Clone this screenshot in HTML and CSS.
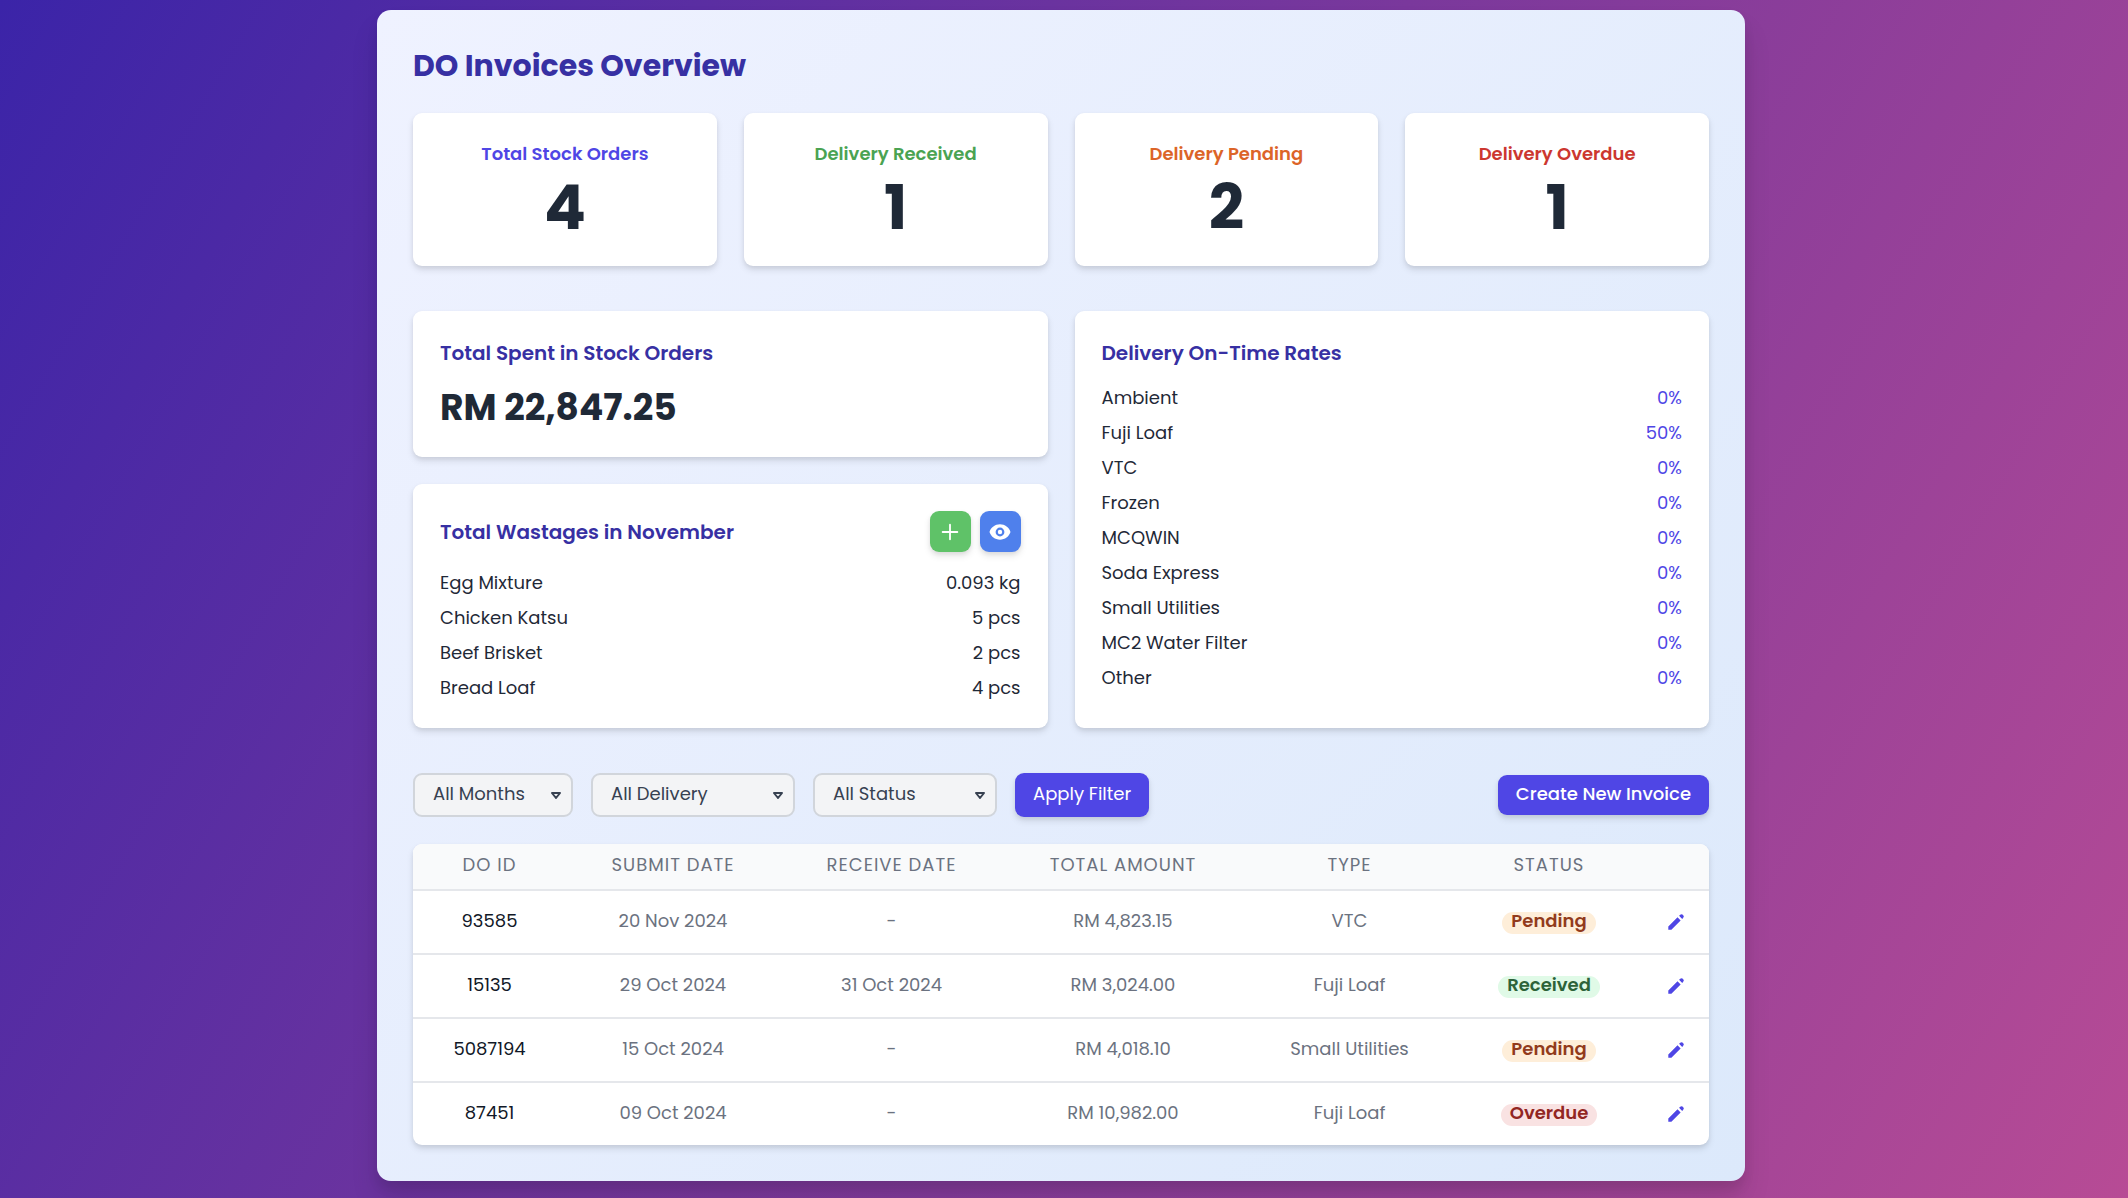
FILE: index.html
```html
<!DOCTYPE html>
<html lang="en">
<head>
<meta charset="utf-8">
<meta name="viewport" content="width=device-width, initial-scale=1">
<title>DO Invoices Overview</title>
<link rel="stylesheet" href="styles.css">
</head>
<body>
<svg class="sprite" aria-hidden="true">
  <symbol id="icon-pencil" viewBox="0 0 20 20"><path d="M13.586 3.586a2 2 0 112.828 2.828l-.793.793-2.828-2.828.793-.793zM11.379 5.793L3 14.172V17h2.828l8.38-8.379-2.83-2.828z"/></symbol>
  <symbol id="icon-plus" viewBox="0 0 24 24"><path d="M12 4v16m8-8H4" fill="none" stroke="currentColor" stroke-width="2" stroke-linecap="round"/></symbol>
  <symbol id="icon-eye" viewBox="0 0 20 20"><path d="M10 12a2 2 0 100-4 2 2 0 000 4z"/><path fill-rule="evenodd" d="M.458 10C1.732 5.943 5.522 3 10 3s8.268 2.943 9.542 7c-1.274 4.057-5.064 7-9.542 7S1.732 14.057.458 10zM14 10a4 4 0 11-8 0 4 4 0 018 0z"/></symbol>
</svg>
<main class="panel">
  <h1 class="page-title">DO Invoices Overview</h1>

  <section class="stats">
    <div class="card stat"><h2 class="stat-label indigo">Total Stock Orders</h2><p class="stat-value">4</p></div>
    <div class="card stat"><h2 class="stat-label green">Delivery Received</h2><p class="stat-value">1</p></div>
    <div class="card stat"><h2 class="stat-label orange">Delivery Pending</h2><p class="stat-value">2</p></div>
    <div class="card stat"><h2 class="stat-label red">Delivery Overdue</h2><p class="stat-value">1</p></div>
  </section>

  <section class="summary">
    <div class="summary-column">
      <div class="card">
        <h2 class="card-title">Total Spent in Stock Orders</h2>
        <p class="spent">RM 22,847.25</p>
      </div>
      <div class="card">
        <div class="card-head">
          <h2 class="card-title">Total Wastages in November</h2>
          <div class="card-actions">
            <button type="button" class="icon-button add" aria-label="Add wastage"><svg class="icon"><use href="#icon-plus"/></svg></button>
            <button type="button" class="icon-button view" aria-label="View wastages"><svg class="icon"><use href="#icon-eye"/></svg></button>
          </div>
        </div>
        <ul class="list">
          <li><span>Egg Mixture</span><span>0.093 kg</span></li>
          <li><span>Chicken Katsu</span><span>5 pcs</span></li>
          <li><span>Beef Brisket</span><span>2 pcs</span></li>
          <li><span>Bread Loaf</span><span>4 pcs</span></li>
        </ul>
      </div>
    </div>
    <div class="card">
      <h2 class="card-title">Delivery On-Time Rates</h2>
      <ul class="list rates">
        <li><span>Ambient</span><span class="rate">0%</span></li>
        <li><span>Fuji Loaf</span><span class="rate">50%</span></li>
        <li><span>VTC</span><span class="rate">0%</span></li>
        <li><span>Frozen</span><span class="rate">0%</span></li>
        <li><span>MCQWIN</span><span class="rate">0%</span></li>
        <li><span>Soda Express</span><span class="rate">0%</span></li>
        <li><span>Small Utilities</span><span class="rate">0%</span></li>
        <li><span>MC2 Water Filter</span><span class="rate">0%</span></li>
        <li><span>Other</span><span class="rate">0%</span></li>
      </ul>
    </div>
  </section>

  <div class="toolbar">
    <form class="filters">
      <div class="select-wrap months">
        <select class="select" aria-label="Month"><option>All Months</option></select>
        <svg class="caret" viewBox="0 0 10 8"><path d="M1 2h8L5 7z"/></svg>
      </div>
      <div class="select-wrap delivery">
        <select class="select" aria-label="Delivery"><option>All Delivery</option></select>
        <svg class="caret" viewBox="0 0 10 8"><path d="M1 2h8L5 7z"/></svg>
      </div>
      <div class="select-wrap status">
        <select class="select" aria-label="Status"><option>All Status</option></select>
        <svg class="caret" viewBox="0 0 10 8"><path d="M1 2h8L5 7z"/></svg>
      </div>
      <button type="button" class="button apply">Apply Filter</button>
    </form>
    <a href="#" class="button create">Create New Invoice</a>
  </div>

  <div class="table-card">
    <table class="invoices">
      <colgroup><col class="col-id"><col class="col-submit"><col class="col-receive"><col class="col-amount"><col class="col-type"><col class="col-status"><col class="col-edit"></colgroup>
      <thead>
        <tr><th>DO ID</th><th>Submit Date</th><th>Receive Date</th><th>Total Amount</th><th>Type</th><th>Status</th><th></th></tr>
      </thead>
      <tbody>
        <tr><td class="id">93585</td><td>20 Nov 2024</td><td>-</td><td>RM 4,823.15</td><td>VTC</td><td><span class="badge pending">Pending</span></td><td class="actions"><a href="#" class="edit" aria-label="Edit 93585"><svg class="icon"><use href="#icon-pencil"/></svg></a></td></tr>
        <tr><td class="id">15135</td><td>29 Oct 2024</td><td>31 Oct 2024</td><td>RM 3,024.00</td><td>Fuji Loaf</td><td><span class="badge received">Received</span></td><td class="actions"><a href="#" class="edit" aria-label="Edit 15135"><svg class="icon"><use href="#icon-pencil"/></svg></a></td></tr>
        <tr><td class="id">5087194</td><td>15 Oct 2024</td><td>-</td><td>RM 4,018.10</td><td>Small Utilities</td><td><span class="badge pending">Pending</span></td><td class="actions"><a href="#" class="edit" aria-label="Edit 5087194"><svg class="icon"><use href="#icon-pencil"/></svg></a></td></tr>
        <tr><td class="id">87451</td><td>09 Oct 2024</td><td>-</td><td>RM 10,982.00</td><td>Fuji Loaf</td><td><span class="badge overdue">Overdue</span></td><td class="actions"><a href="#" class="edit" aria-label="Edit 87451"><svg class="icon"><use href="#icon-pencil"/></svg></a></td></tr>
      </tbody>
    </table>
  </div>
</main>
</body>
</html>
```
FILE: styles.css
```css
*, *::before, *::after { box-sizing: border-box; }

body {
  margin: 0;
  min-height: 100vh;
  padding: 10px 22px 17px 16px;
  font-family: Poppins, Inter, "Open Sans", sans-serif;
  font-size: 18px;
  line-height: 27px;
  color: #1f2937;
  background: linear-gradient(120deg, #3b24a8, #7a389c 50%, #b74b95);
}

h1, h2, p, ul { margin: 0; padding: 0; }
ul { list-style: none; }
a { color: inherit; text-decoration: none; }
button, select { font: inherit; color: inherit; }

.sprite { display: none; }
.icon { display: block; width: 22px; height: 22px; fill: currentColor; }

.panel {
  max-width: 1368px;
  margin: 0 auto;
  padding: 36px;
  border-radius: 14px;
  background: linear-gradient(135deg, #eff2ff, #dce9fb);
  box-shadow: 0 20px 28px rgba(0, 0, 0, .1), 0 8px 11px rgba(0, 0, 0, .08);
}

.page-title {
  margin-bottom: 27px;
  font-size: 30px;
  line-height: 40px;
  font-weight: 700;
  color: #3730a3;
}

.card {
  padding: 27px;
  border-radius: 9px;
  background: #fff;
  box-shadow: 0 4px 7px rgba(0, 0, 0, .1), 0 2px 4px rgba(0, 0, 0, .06);
}

.stats {
  display: grid;
  grid-template-columns: repeat(4, 1fr);
  gap: 27px;
  margin-bottom: 45px;
}
.stat { text-align: center; }
.stat-label { font-size: 18px; line-height: 27px; font-weight: 600; }
.stat-value { margin-top: 9px; font-size: 62px; line-height: 63px; font-weight: 700; }
.indigo { color: #4f46e5; }
.green { color: #4aa352; }
.orange { color: #dc6428; }
.red { color: #cc3730; }

.summary {
  display: grid;
  grid-template-columns: 1fr 1fr;
  gap: 27px;
  margin-bottom: 45px;
}
.summary-column { display: flex; flex-direction: column; gap: 27px; }
.card-title { font-size: 20px; line-height: 30px; font-weight: 600; color: #3730a3; }
.spent { margin-top: 18px; font-size: 36px; line-height: 44px; font-weight: 700; }
.card-head {
  display: flex;
  align-items: center;
  justify-content: space-between;
  margin-bottom: 17px;
}
.card-actions { display: flex; gap: 9px; }
.icon-button {
  display: grid;
  place-items: center;
  width: 41px;
  height: 41px;
  padding: 0;
  border: 0;
  border-radius: 9px;
  color: #fff;
  box-shadow: 0 4px 7px rgba(0, 0, 0, .1), 0 2px 4px rgba(0, 0, 0, .06);
}
.add { background: #5fc268; }
.view { background: #4f80ec; }

.list { display: flex; flex-direction: column; gap: 8px; }
.list li { display: flex; justify-content: space-between; }
.rates { margin-top: 16px; }
.rate { color: #4f46e5; }

.toolbar {
  display: flex;
  align-items: center;
  justify-content: space-between;
  margin-bottom: 27px;
}
.filters { display: flex; gap: 18px; }
.select-wrap { position: relative; }
.months { width: 160px; }
.delivery { width: 204px; }
.status { width: 184px; }
.select {
  display: block;
  width: 100%;
  height: 44px;
  padding: 0 18px 4px;
  border: 2px solid #d1d5db;
  border-radius: 9px;
  appearance: none;
  color: #374151;
  background: #f3f4f6;
}
.caret {
  position: absolute;
  top: 18px;
  right: 12px;
  width: 10px;
  height: 8px;
  fill: none;
  stroke: #374151;
  stroke-width: 2;
  stroke-linejoin: round;
  pointer-events: none;
}
.button {
  padding: 0 18px 4px;
  border: 0;
  border-radius: 9px;
  font-weight: 400;
  color: #fff;
  background: #4f46e5;
  box-shadow: 0 4px 7px rgba(0, 0, 0, .1), 0 2px 4px rgba(0, 0, 0, .06);
}
.create { padding-bottom: 3px; line-height: 37px; font-weight: 500; }

.table-card {
  overflow: hidden;
  border-radius: 9px;
  background: #fff;
  box-shadow: 0 4px 7px rgba(0, 0, 0, .1), 0 2px 4px rgba(0, 0, 0, .06);
}
.invoices {
  width: 100%;
  table-layout: fixed;
  border-collapse: separate;
  border-spacing: 0;
  text-align: center;
  color: #6b7280;
}
.col-id { width: 153px; }
.col-submit { width: 214px; }
.col-receive { width: 223px; }
.col-amount { width: 240px; }
.col-type { width: 213px; }
.col-status { width: 186px; }
.col-edit { width: 67px; }
.invoices th {
  height: 47px;
  padding: 0 0 4px;
  border-bottom: 2px solid #e5e7eb;
  font-weight: 400;
  letter-spacing: 1px;
  text-transform: uppercase;
  background: #f9fafb;
}
.invoices td { height: 64px; padding: 0 0 4px; border-bottom: 2px solid #e5e7eb; }
.invoices tr:last-child td { height: 62px; border-bottom: 0; }
.invoices .id { color: #111827; }
.invoices .actions { padding: 0; }
.badge {
  display: inline-block;
  padding: 0 9px 4px;
  border-radius: 11px;
  line-height: 18px;
  font-weight: 600;
}
.pending { color: #923b1c; background: #feeed9; }
.received { color: #2d6339; background: #e0fae7; }
.overdue { color: #922622; background: #f9e2e2; }
.edit { display: grid; place-items: center; color: #4f46e5; }
```
